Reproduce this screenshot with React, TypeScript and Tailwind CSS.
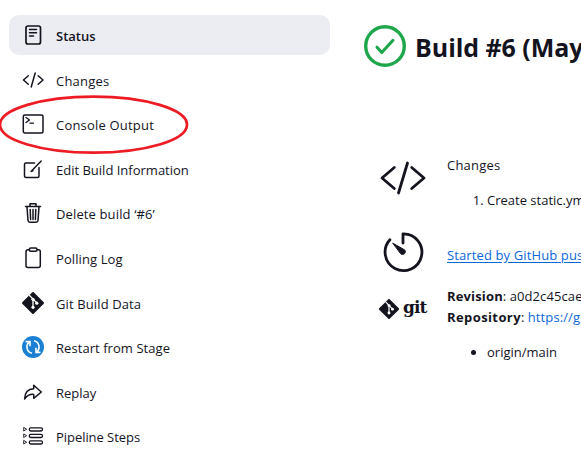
import type { ReactNode } from "react";

const line = {
  fill: "none",
  stroke: "currentColor",
  strokeWidth: 1.5,
  strokeLinecap: "round" as const,
  strokeLinejoin: "round" as const,
};

function Icon({ children }: { children: ReactNode }) {
  return (
    <svg viewBox="0 0 24 24" className="size-6 shrink-0" {...line}>
      {children}
    </svg>
  );
}

function GitMark() {
  return (
    <>
      <path d="M12 2 22 12 12 22 2 12Z" fill="currentColor" stroke="currentColor" strokeWidth="2" strokeLinejoin="round" />
      <path d="M8.5 4.5 12 8v8M12.3 8.4l3.4 3.4" stroke="#fff" strokeWidth="1.3" fill="none" />
      <g fill="#fff" stroke="none">
        <circle cx="12" cy="8.3" r="1.6" />
        <circle cx="12" cy="16.3" r="1.6" />
        <circle cx="15.8" cy="12.2" r="1.6" />
      </g>
    </>
  );
}

const items: { label: string; text: string; icon: ReactNode }[] = [
  {
    label: "Status",
    text: "font-semibold",
    icon: (
      <>
        <rect x="5" y="3" width="14.5" height="18" rx="2" strokeWidth="1.7" />
        <path d="M8.5 6.5h7M8.5 9.7h7M8.5 13h4" />
      </>
    ),
  },
  {
    label: "Changes",
    text: "pt-[4px] tracking-[0.22px]",
    icon: <path d="M7.3 7.8 2.5 12l4.8 4.2M17.2 7.8 22 12l-4.8 4.2M14.2 5l-4 14" />,
  },
  {
    label: "Console Output",
    text: "tracking-[0.2px]",
    icon: (
      <>
        <rect x="2.3" y="3" width="19.7" height="18" rx="1.5" />
        <path d="M5 5.5 8.5 8 5 10.6M9 11.2h3.4" strokeWidth="1.3" />
      </>
    ),
  },
  {
    label: "Edit Build Information",
    text: "",
    icon: <path d="M13.5 6H5Q3.5 6 3.5 7.5v11Q3.5 20.5 5 20.5h11.5q1.5 0 1.5-1.5v-8.5M10.5 14 20.2 4M10.2 14.4l1.8-.6" />,
  },
  {
    label: "Delete build ‘#6’",
    text: "tracking-[0.13px]",
    icon: (
      <>
        <path d="M4.5 5.5h15M9 5V2.8h6V5M6 6l1 13.5q.2 1.8 2 1.8h6q1.8 0 2-1.8L18 6" />
        <path d="M9.2 8.5l.4 10M12 8.5v10M14.8 8.5l-.4 10" />
      </>
    ),
  },
  {
    label: "Polling Log",
    text: "tracking-[0.1px]",
    icon: (
      <>
        <path d="M8.5 3.7H7Q5 3.7 5 5.7v13.8q0 2 2 2h10.3q2 0 2-2V5.7q0-2-2-2H16" />
        <rect x="8.3" y="2" width="7.8" height="3.3" rx="1.5" />
      </>
    ),
  },
  { label: "Git Build Data", text: "pt-[4px] tracking-[0.12px]", icon: <GitMark /> },
  {
    label: "Restart from Stage",
    text: "tracking-[0.06px]",
    icon: (
      <>
        <circle cx="12" cy="12" r="11" fill="#1b80d3" stroke="none" />
        <g stroke="#fff" strokeWidth="1.6" fill="none" strokeLinecap="butt">
          <path d="M11 18.2A6.3 6.3 0 0 1 8.2 7.2M13 5.8a6.3 6.3 0 0 1 2.8 11" />
          <path d="M4.6 6.6h4.4v4.6M19.4 17.4H15v-4.6" strokeLinejoin="miter" />
        </g>
      </>
    ),
  },
  {
    label: "Replay",
    text: "",
    icon: <path d="M12.7 5.2 20.3 12l-7.6 6.3v-3.9C8.5 14.1 6 15.5 3.6 19 3.8 12.3 7.5 8.9 12.7 8.7Z" />,
  },
  {
    label: "Pipeline Steps",
    text: "tracking-[-0.05px]",
    icon: (
      <g strokeWidth="1.3">
        <rect x="8.3" y="3.8" width="13.2" height="3.2" rx="1.4" />
        <rect x="8.3" y="10.3" width="13.2" height="3.2" rx="1.4" />
        <rect x="8.3" y="16.8" width="13.2" height="3.2" rx="1.4" />
        <path d="M2.7 3.8v3.2l2.6-1.6ZM2.7 10.3v3.2l2.6-1.6ZM2.7 16.8v3.2l2.6-1.6Z" strokeWidth="0.9" />
      </g>
    ),
  },
];

export default function App() {
  return (
    <div className="relative flex h-[455px] w-[581px] overflow-hidden bg-white font-['Open_Sans','Noto_Sans',sans-serif] text-[13px] text-[#14141f]">
      <nav className="flex w-[330px] shrink-0 flex-col gap-[4.6px] pt-[15px] pl-[9px]">
        {items.map((item, i) => (
          <a
            key={item.label}
            className={`flex h-10 shrink-0 items-center gap-[11px] rounded-[10px] pl-3 ${i === 0 ? "bg-[#ecedf3]" : ""}`}
          >
            <Icon>{item.icon}</Icon>
            <span className={`whitespace-nowrap ${item.text.startsWith("pt-") ? "" : "pt-[3px]"} ${item.text}`}>
              {item.label}
            </span>
          </a>
        ))}
      </nav>

      <main className="min-w-0 flex-1 overflow-hidden pl-[34px]">
        <header className="flex h-[92px] items-center gap-[9px]">
          <svg viewBox="0 0 42 42" className="size-[42px] shrink-0" fill="none" stroke="#1ea64b">
            <circle cx="21" cy="21" r="19.3" strokeWidth="3.4" />
            <path d="m13 22.2 4.8 5.3L29 15.3" strokeWidth="3.1" strokeLinecap="round" strokeLinejoin="round" />
          </svg>
          <h1 className="whitespace-nowrap pt-1 text-[25px] font-bold tracking-[-0.05px]">Build #6 (May</h1>
        </header>

        <section className="flex h-[135px] gap-5 pt-[62px] pl-[15px]">
          <svg viewBox="0 0 48 48" className="size-12 shrink-0" {...line} strokeWidth={2.8}>
            <path d="M15.3 13.5 3 24l12.3 10.5M32.7 13.5 45 24 32.7 34.5M28.5 9l-9 30" />
          </svg>
          <div className="whitespace-nowrap">
            <p className="pt-[1px] leading-5 tracking-[0.22px]">Changes</p>
            <ol className="mt-[15px] list-decimal pl-10 leading-5">
              <li>Create static.ym</li>
            </ol>
          </div>
        </section>

        <section className="flex h-[58px] gap-5 pl-[15px]">
          <svg viewBox="0 0 48 48" className="size-12 shrink-0" {...line} strokeWidth={2.8}>
            <path d="M24 16V6.8a18.4 18.4 0 1 1-13.1 6" />
            <path d="M14 16.3 25.8 23a2.8 2.8 0 0 1-3.8 4Z" fill="currentColor" strokeWidth="1" />
          </svg>
          <a className="whitespace-nowrap pt-[18px] leading-5 font-medium tracking-[0.12px] text-[#0b68d8] underline underline-offset-2">
            Started by GitHub pus
          </a>
        </section>

        <section className="flex gap-5 pl-[15px]">
          <div className="flex h-12 w-12 shrink-0 items-center gap-[3px]">
            <svg viewBox="0 0 24 24" className="-ml-px size-[22px] shrink-0">
              <GitMark />
            </svg>
            <span className="pb-[3px] font-['DejaVu_Serif',serif] text-[17px] leading-none font-bold tracking-[-0.9px]">
              git
            </span>
          </div>
          <div className="whitespace-nowrap pt-px leading-[21px]">
            <p>
              <b className="tracking-[0.15px]">Revision</b>: <span className="tracking-[0.1px]">a0d2c45cae</span>
            </p>
            <p>
              <b className="tracking-[0.4px]">Repository</b>:{" "}
              <a className="font-medium tracking-[0.1px] text-[#0b68d8]">https://g</a>
            </p>
            <ul className="mt-[14px] list-disc pl-10">
              <li>origin/main</li>
            </ul>
          </div>
        </section>
      </main>

      <svg viewBox="0 0 190 62" className="pointer-events-none absolute top-[94px] left-0 h-[62px] w-[190px]">
        <ellipse cx="93.5" cy="30.7" rx="93.5" ry="28" fill="none" stroke="#ed1c24" strokeWidth="2.7" />
      </svg>
    </div>
  );
}
